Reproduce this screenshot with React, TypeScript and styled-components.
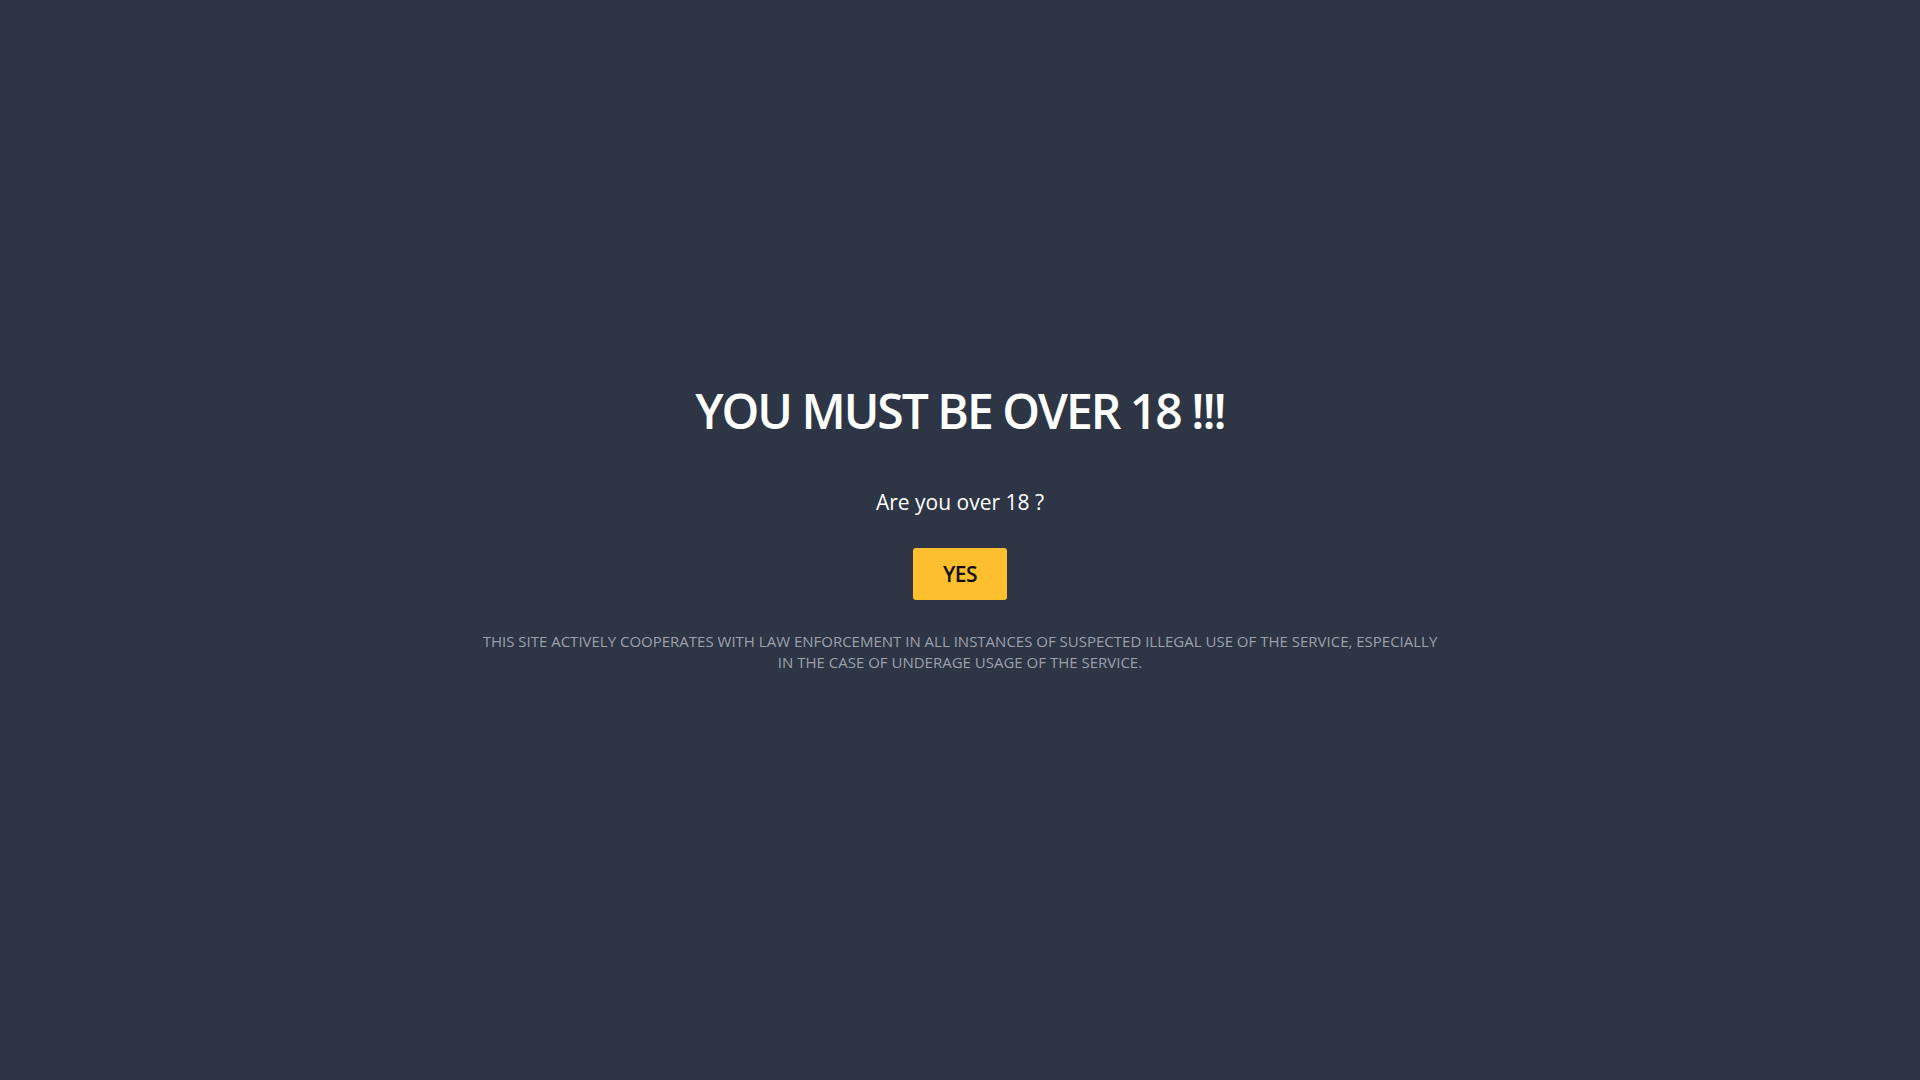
import React from "react";
import styled, { createGlobalStyle } from "styled-components";

const GlobalStyle = createGlobalStyle`
  html, body {
    margin: 0;
    padding: 0;
    background-color: #2e3545;
  }
  body {
    font-family: "Open Sans", "Liberation Sans", sans-serif;
  }
`;

const Page = styled.div`
  min-height: 100vh;
  box-sizing: border-box;
  padding-top: 382px;
  display: flex;
  flex-direction: column;
  align-items: center;
  background-color: #2e3545;
`;

const Title = styled.h1`
  margin: 0;
  font-size: 48px;
  line-height: 58px;
  font-weight: 600;
  color: #ffffff;
  letter-spacing: -2px;
`;

const Question = styled.p`
  margin: 47px 0 0;
  font-size: 21px;
  line-height: 31px;
  font-weight: 400;
  color: #ffffff;
`;

const YesButton = styled.button`
  margin-top: 30px;
  width: 94px;
  height: 52px;
  border: 0;
  border-radius: 3px;
  background-color: #fdbf2d;
  color: #111111;
  font-family: inherit;
  font-size: 21px;
  font-weight: 600;
  letter-spacing: -0.5px;
  cursor: pointer;
  :hover {
    background-color: #f5b51c;
  }
`;

const Notice = styled.p`
  margin: 31px 0 0;
  max-width: 960px;
  font-size: 15px;
  line-height: 21px;
  text-align: center;
  text-transform: uppercase;
  color: #9ca1ac;
`;

const App: React.FC = () => {
  return (
    <>
      <GlobalStyle />
      <Page>
        <Title>YOU MUST BE OVER 18 !!!</Title>
        <Question>Are you over 18 ?</Question>
        <YesButton>YES</YesButton>
        <Notice>
          This site actively cooperates with law enforcement in all instances of suspected illegal use of the
          service, especially in the case of underage usage of the service.
        </Notice>
      </Page>
    </>
  );
};

export default App;
